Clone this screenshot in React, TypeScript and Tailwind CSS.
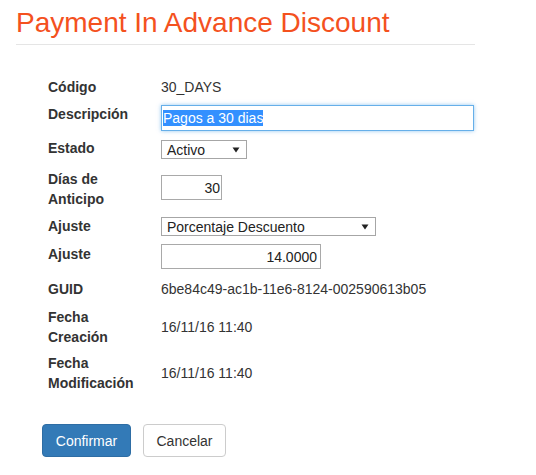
import React from "react";

const Arrow = () => (
  <svg width="8" height="6" viewBox="0 0 8 6" className="shrink-0">
    <path d="M0.5 0.5 L7.5 0.5 L4 5.5 Z" fill="#222" />
  </svg>
);

export default function App() {
  const label = "block w-[95px] font-bold text-[14px] leading-[20px] text-[#333]";
  return (
    <div
      className="w-[536px] h-[475px] bg-white text-[#333] text-[14px] leading-[20px]"
      style={{ fontFamily: '"Liberation Sans", Arial, Helvetica, sans-serif' }}
    >
      <div className="pl-[16px] pr-[61px] pt-[7px]">
        <h1 className="text-[28px] leading-[32px] text-[#f4511e] font-normal">
          Payment In Advance Discount
        </h1>
        <div className="mt-[5px] border-t border-[#e5e5e5]" />
      </div>

      <div className="flex flex-col pl-[48px] mt-[32px]">
        {/* Código */}
        <div className="flex">
          <div className="w-[113px] shrink-0">
            <span className={label}>Código</span>
          </div>
          <div>30_DAYS</div>
        </div>

        {/* Descripción */}
        <div className="flex mt-[7px]">
          <div className="w-[113px] shrink-0">
            <span className={label}>Descripción</span>
          </div>
          <div className="mt-px h-[26px] w-[313px] border border-[#66afe9] shadow-[0_0_4px_rgba(102,175,233,0.7)] flex items-center pl-px">
            <span className="bg-[#3390ff] text-white leading-[16px]">Pagos a 30 dias</span>
          </div>
        </div>

        {/* Estado */}
        <div className="flex mt-[7px]">
          <div className="w-[113px] shrink-0">
            <span className={label}>Estado</span>
          </div>
          <div className="mt-[2px] h-[19px] w-[86px] border border-[#a6a6a6] flex items-center justify-between pl-[5px] pr-[6px] text-[#222]">
            <span>Activo</span>
            <Arrow />
          </div>
        </div>

        {/* Días de Anticipo */}
        <div className="flex mt-[10px]">
          <div className="w-[113px] shrink-0">
            <span className={label}>Días de Anticipo</span>
          </div>
          <div className="mt-[6px] h-[25px] w-[61px] border border-[#a9a9a9] flex items-center justify-end pr-px text-[#222]">
            30
          </div>
        </div>

        {/* Ajuste select */}
        <div className="flex mt-[7px]">
          <div className="w-[113px] shrink-0">
            <span className={label}>Ajuste</span>
          </div>
          <div className="mt-px h-[19px] w-[215px] border border-[#a6a6a6] flex items-center justify-between pl-[5px] pr-[6px] text-[#222]">
            <span>Porcentaje Descuento</span>
            <Arrow />
          </div>
        </div>

        {/* Ajuste input */}
        <div className="flex mt-[8px]">
          <div className="w-[113px] shrink-0">
            <span className={label}>Ajuste</span>
          </div>
          <div className="h-[25px] w-[160px] border border-[#a9a9a9] flex items-center justify-end pr-[3px] text-[#222]">
            14.0000
          </div>
        </div>

        {/* GUID */}
        <div className="flex mt-[10px]">
          <div className="w-[113px] shrink-0">
            <span className={label}>GUID</span>
          </div>
          <div>6be84c49-ac1b-11e6-8124-002590613b05</div>
        </div>

        {/* Fecha Creación */}
        <div className="flex items-center mt-[8px]">
          <div className="w-[113px] shrink-0">
            <span className={label}>Fecha Creación</span>
          </div>
          <div>16/11/16 11:40</div>
        </div>

        {/* Fecha Modificación */}
        <div className="flex items-center mt-[6px]">
          <div className="w-[113px] shrink-0">
            <span className={label}>Fecha Modificación</span>
          </div>
          <div>16/11/16 11:40</div>
        </div>
      </div>

      <div className="flex gap-[12px] pl-[42px] mt-[31px]">
        <button className="h-[33px] w-[89px] rounded-[4px] bg-[#337ab7] border border-[#2e6da4] text-white text-[14px]">
          Confirmar
        </button>
        <button className="h-[33px] w-[83px] rounded-[4px] bg-white border border-[#ccc] text-[#333] text-[14px]">
          Cancelar
        </button>
      </div>
    </div>
  );
}
